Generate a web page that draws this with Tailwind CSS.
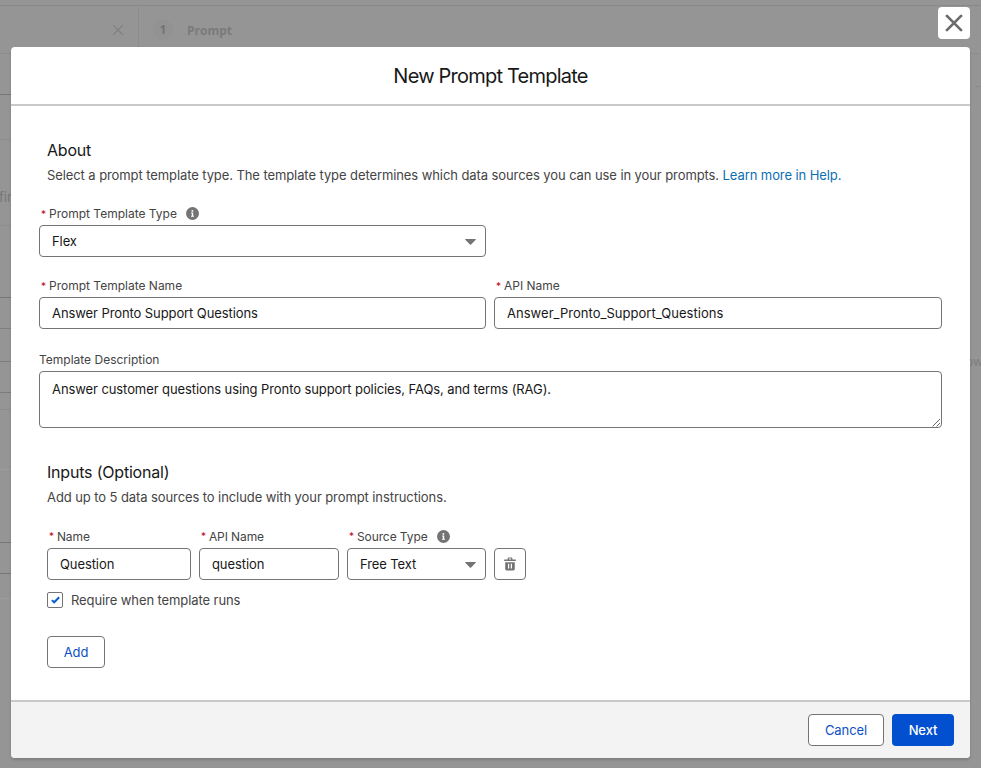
<!DOCTYPE html>
<html lang="en">
<head>
  <meta charset="UTF-8" />
  <meta name="viewport" content="width=device-width, initial-scale=1.0" />
  <title>New Prompt Template</title>
  <script src="https://cdn.jsdelivr.net/npm/@tailwindcss/browser@4"></script>
</head>
<body class="relative h-screen overflow-hidden bg-[#959595] font-['Inter',sans-serif] text-[13px] text-[#181818]">

  <!-- Page behind the modal -->
  <div class="flex h-full flex-col" aria-hidden="true">
    <div class="h-[6px] border-b border-[#898989]"></div>
    <div class="flex h-[48px] items-center border-b border-[#8d8d8d] pt-px text-[#7a7a7a]">
      <div class="flex h-full w-[139px] items-center justify-end border-r border-[#8c8c8c] pr-[15px]">
        <svg class="h-[10px] w-[10px]" viewBox="0 0 10 10" fill="none" stroke="#7e7e7e" stroke-width="1.1"><path d="M0 0l10 10M10 0L0 10" /></svg>
      </div>
      <span class="ml-[14px] flex h-5 w-5 items-center justify-center rounded-full bg-[#929292] font-['Open_Sans',sans-serif] text-[12px] font-bold text-[#747474]">1</span>
      <span class="ml-[14px] pt-px font-['Open_Sans',sans-serif] text-[12px] font-bold">Prompt</span>
    </div>
    <div class="flex flex-1 justify-between">
      <div class="w-[11px] overflow-hidden">
        <div class="h-[41px] border-b border-[#777]"></div>
        <div class="h-[45px] border-b border-[#8e8e8e]"></div>
        <div class="h-[86px] border-b border-[#8e8e8e] pt-[48px] -ml-px text-[#777]">fin</div>
        <div class="h-[72px] border-b border-[#777]"></div>
        <div class="h-[31px] border-b border-[#808080]"></div>
        <div class="h-[33px] border-b border-[#7c7c7c]"></div>
        <div class="h-[31px] border-b border-[#7c7c7c]"></div>
        <div class="h-[17px] border-b border-[#8c8c8c]"></div>
        <div class="h-[60px] border-b border-[#9c9c9c]"></div>
        <div class="h-[73px] border-b border-[#777]"></div>
        <div class="h-[31px] border-b border-[#777]"></div>
        <div class="h-[25px] border-b border-[#9c9c9c]"></div>
      </div>
      <div class="flex w-[11px] flex-col overflow-hidden">
        <div class="ml-[5px] h-[33px] border-b border-[#8a8a8a]"></div>
        <div class="mt-[266px] -ml-[4px] text-[12px] text-[#7c7c7c]">ow</div>
      </div>
    </div>
  </div>

  <!-- Modal -->
  <div class="absolute inset-0 flex flex-col pt-[7px] pr-[11px] pb-[10px] pl-[11px] tracking-[-0.09px]">
    <button class="mb-2 flex h-8 w-8 shrink-0 items-center justify-center self-end rounded bg-white">
      <svg class="h-[18px] w-[18px]" viewBox="0 0 18 18" fill="none" stroke="#6b6b6b" stroke-width="2.7" stroke-linecap="round"><path d="M1.9 1.9l14.2 14.2M16.1 1.9L1.9 16.1" /></svg>
    </button>

    <div class="flex flex-1 flex-col rounded bg-white shadow-[0_2px_3px_rgba(0,0,0,0.16)]">
      <header class="flex h-[59px] items-center justify-center border-b-2 border-[#c9c9c9] pt-[2px]">
        <h2 class="text-[20px] leading-[25px] tracking-[-0.78px]">New Prompt Template</h2>
      </header>

      <main class="flex-1 px-7 pt-8">
        <h3 class="pl-2 text-[16px] leading-6 tracking-[-0.2px]">About</h3>
        <p class="mt-[3px] pl-2 leading-5 whitespace-nowrap text-[#444]">Select a prompt template type. The template type determines which data sources you can use in your prompts. <a class="text-[#0b6fb5]" href="#">Learn more in Help.</a></p>

        <!-- Template type -->
        <div class="mt-5 w-[447px]">
          <div class="flex h-[18px] items-center pl-[2px] text-[12px] tracking-normal text-[#444]">
            <span class="mr-[3px] text-[10px] text-[#ba0517]">*</span>Prompt Template Type
            <svg class="mb-px ml-[9px] h-[13px] w-[13px]" viewBox="0 0 13 13"><circle cx="6.5" cy="6.5" r="6.5" fill="#747474" /><circle cx="6.4" cy="3.9" r="0.95" fill="#fff" /><path d="M5.1 5.6h2.1v3.2h0.8v0.9H5v-0.9h0.8V6.5H5.1z" fill="#fff" /></svg>
          </div>
          <div class="mt-[2px] flex h-8 items-center justify-between rounded border border-[#747474] pt-[2px] pr-[9px] pl-3">
            <span>Flex</span>
            <svg class="h-[6px] w-[11px]" viewBox="0 0 11 6"><path d="M0.6 0h9.8q.8 0 .3.7L6.1 5.6q-.6.5-1.2 0L.3.7Q-.2 0 .6 0z" fill="#747474" /></svg>
          </div>
        </div>

        <!-- Names -->
        <div class="mt-5 grid grid-cols-[447px_448px] gap-2">
          <div>
            <div class="flex h-[18px] items-center pl-[2px] text-[12px] tracking-normal text-[#444]"><span class="mr-[3px] text-[10px] text-[#ba0517]">*</span>Prompt Template Name</div>
            <div class="mt-[2px] flex h-8 items-center rounded border border-[#747474] px-3 pt-[2px]">Answer Pronto Support Questions</div>
          </div>
          <div>
            <div class="flex h-[18px] items-center pl-[2px] text-[12px] tracking-normal text-[#444]"><span class="mr-[3px] text-[10px] text-[#ba0517]">*</span>API Name</div>
            <div class="mt-[2px] flex h-8 items-center rounded border border-[#747474] px-3 pt-[2px] tracking-[0.03px]">Answer_Pronto_Support_Questions</div>
          </div>
        </div>

        <!-- Description -->
        <div class="mt-[22px]">
          <div class="h-[18px] text-[12px] leading-[18px] tracking-normal text-[#444]">Template Description</div>
          <div class="mt-[2px] flex h-[57px] justify-between rounded border border-[#747474] pt-[7px] pl-3">
            <span class="leading-5">Answer customer questions using Pronto support policies, FAQs, and terms (RAG).</span>
            <svg class="h-[9px] w-[9px] self-end" viewBox="0 0 9 9" fill="none" stroke="#666" stroke-width="1"><path d="M0.5 8.5L8 1M4.5 8.5L8 5" /></svg>
          </div>
        </div>

        <!-- Inputs -->
        <div class="mt-8 pl-2">
          <h3 class="text-[16px] leading-6 tracking-[-0.2px]">Inputs (Optional)</h3>
          <p class="mt-[3px] leading-5 text-[#444]">Add up to 5 data sources to include with your prompt instructions.</p>

          <div class="mt-5 flex items-end gap-2">
            <div class="w-[144px]">
              <div class="flex h-[18px] items-center pt-px pl-[2px] text-[12px] text-[#444]"><span class="mr-[3px] text-[10px] text-[#ba0517]">*</span>Name</div>
              <div class="mt-[3px] flex h-8 items-center rounded border border-[#747474] px-3 pt-[2px]">Question</div>
            </div>
            <div class="w-[140px]">
              <div class="flex h-[18px] items-center pt-px pl-[2px] text-[12px] text-[#444]"><span class="mr-[3px] text-[10px] text-[#ba0517]">*</span>API Name</div>
              <div class="mt-[3px] flex h-8 items-center rounded border border-[#747474] px-3 pt-[2px]">question</div>
            </div>
            <div class="w-[139px]">
              <div class="flex h-[18px] items-center pt-px pl-[2px] text-[12px] text-[#444]">
                <span class="mr-[3px] text-[10px] text-[#ba0517]">*</span>Source Type
                <svg class="mb-px ml-[9px] h-[13px] w-[13px]" viewBox="0 0 13 13"><circle cx="6.5" cy="6.5" r="6.5" fill="#747474" /><circle cx="6.4" cy="3.9" r="0.95" fill="#fff" /><path d="M5.1 5.6h2.1v3.2h0.8v0.9H5v-0.9h0.8V6.5H5.1z" fill="#fff" /></svg>
              </div>
              <div class="mt-[3px] flex h-8 items-center justify-between rounded border border-[#747474] pt-[2px] pr-[9px] pl-3">
                <span>Free Text</span>
                <svg class="mb-px h-[6px] w-[11px]" viewBox="0 0 11 6"><path d="M0.6 0h9.8q.8 0 .3.7L6.1 5.6q-.6.5-1.2 0L.3.7Q-.2 0 .6 0z" fill="#747474" /></svg>
              </div>
            </div>
            <button class="flex h-8 w-8 items-center justify-center rounded border border-[#747474]">
              <svg class="h-[14px] w-[12px]" viewBox="0 0 12 14" fill="#747474"><path fill-rule="evenodd" d="M0.6 2.4H3.6V1.5Q3.6.4 4.7.4H7.3Q8.4.4 8.4 1.5V2.4H11.4Q12 2.4 12 3V3.3Q12 3.9 11.4 3.9H.6Q0 3.9 0 3.3V3Q0 2.4.6 2.4zM4.9 2.4H7.1V1.6H4.9zM1.2 5.2H10.8V12Q10.8 13.4 9.4 13.4H2.6Q1.2 13.4 1.2 12zM4 6.8V11.4H5.2V6.8zM6.8 6.8V11.4H8V6.8z" /></svg>
            </button>
          </div>

          <div class="mt-3 flex h-4 items-center gap-2 text-[#444]">
            <span class="flex h-4 w-4 items-center justify-center rounded-[2px] border border-[#747474]">
              <svg class="h-[8px] w-[9px]" viewBox="0 0 9 8" fill="none" stroke="#0b5cd0" stroke-width="2"><path d="M0.9 4.1L3.2 6.3L8.2 1.2" /></svg>
            </span>
            <span class="pt-[2px]">Require when template runs</span>
          </div>

          <button class="mt-7 flex h-8 w-[58px] items-center justify-center rounded border border-[#747474] pt-[2px] text-[#0b50c4]">Add</button>
        </div>
      </main>

      <footer class="flex h-[58px] items-center justify-end gap-2 rounded-b border-t-2 border-[#c9c9c9] bg-[#f3f3f3] pr-4">
        <button class="h-8 w-[76px] rounded border border-[#747474] bg-white pt-[2px] text-[#0b50c4]">Cancel</button>
        <button class="h-8 w-[62px] rounded bg-[#0250cf] pt-[2px] font-medium text-white">Next</button>
      </footer>
    </div>
  </div>
</body>
</html>
